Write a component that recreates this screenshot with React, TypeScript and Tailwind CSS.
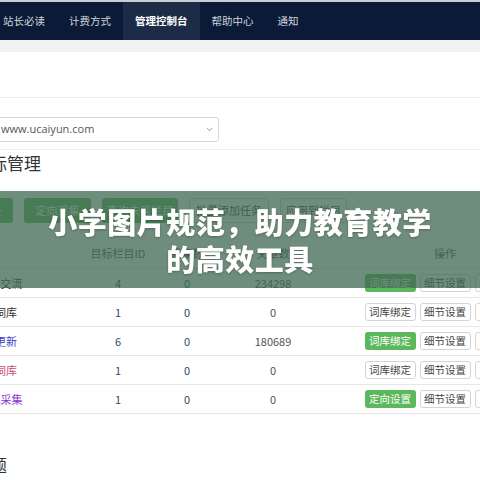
import { ChevronDown } from "lucide-react";

const NAV = ["站长必读", "计费方式", "管理控制台", "帮助中心", "通知"];

const ACTIONS = [
  { label: "添加 +", green: true, w: "w-[53px]" },
  { label: "定向采集", green: true, w: "w-[67px]" },
  { label: "查询未采栏目", green: true, w: "w-[76px]" },
  { label: "批量添加任务", green: false, w: "w-[80px]" },
  { label: "应用到栏目", green: false, w: "w-[67px]" },
];

type Row = {
  name: string;
  color: string;
  id: string;
  got: string;
  total: string;
  first: string;
  green: boolean;
};

const ROWS: Row[] = [
  { name: "站长圈交流", color: "text-[#333333]", id: "4", got: "0", total: "234298", first: "词库绑定", green: true },
  { name: "同义词库", color: "text-[#333333]", id: "1", got: "0", total: "0", first: "词库绑定", green: false },
  { name: "实时更新", color: "text-[#3b3fc9]", id: "6", got: "0", total: "180689", first: "词库绑定", green: true },
  { name: "关键词库", color: "text-[#c4506b]", id: "1", got: "0", total: "0", first: "词库绑定", green: false },
  { name: "自动化采集", color: "text-[#8a36cf]", id: "1", got: "0", total: "0", first: "定向设置", green: true },
];

const COLS = "grid grid-cols-[130px_116px_22px_150px_194px]";

const Cell = ({ children, className = "" }: { children: React.ReactNode; className?: string }) => (
  <div className={`flex items-center justify-center whitespace-nowrap ${className}`}>{children}</div>
);

const RowButton = ({ label, green }: { label: string; green: boolean }) => (
  <div
    className={`w-[51px] h-[18px] flex-shrink-0 flex items-center justify-center rounded-[3px] text-[10.5px] ${
      green ? "bg-[#5cb85c] text-white" : "bg-white border border-[#d4d4d4] text-[#444]"
    }`}
  >
    {label}
  </div>
);

export default function App() {
  return (
    <div
      className="relative w-[480px] h-[480px] overflow-hidden bg-white"
      style={{ fontFamily: '"Noto Sans CJK SC", "Open Sans", sans-serif' }}
    >
      {/* top nav */}
      <div className="h-[2px] bg-[#c9ced6]" />
      <div className="h-[38px] bg-[#0b1a36] flex ml-[-9px]">
        {NAV.map((item) => (
          <div
            key={item}
            className={`px-[12px] flex items-center text-[10.5px] ${
              item === "管理控制台" ? "bg-[#1c2b46] text-white font-bold" : "text-[#ced5df]"
            }`}
          >
            {item}
          </div>
        ))}
      </div>
      <div className="h-[12px] bg-[#f2f2f2]" />

      {/* site select */}
      <div className="h-[45px]" />
      <div className="border-t border-[#eeeeee] pt-[19px] pb-[7px] border-b">
        <div className="ml-[-12px] w-[231px] h-[25px] border border-[#d8d8d8] rounded-[3px] flex items-center justify-between pl-[12px] pr-[4px]">
          <span className="text-[11px] text-[#555]" style={{ fontFamily: '"Open Sans", sans-serif' }}>
            www.ucaiyun.com
          </span>
          <ChevronDown size={9} strokeWidth={2} className="text-[#777]" />
        </div>
      </div>

      {/* heading */}
      <div className="ml-[-27px] h-[26px] leading-[26px] text-[17px] text-[#333]">目标管理</div>

      {/* action buttons */}
      <div className="mt-[22px] ml-[-40px] flex gap-[11px] h-[25px]">
        {ACTIONS.map((a) => (
          <div
            key={a.label}
            className={`${a.w} flex-shrink-0 flex items-center justify-center rounded-[3px] text-[11px] whitespace-nowrap ${
              a.green ? "bg-[#5cb85c] text-white" : "bg-white border border-[#d4d4d4] text-[#444]"
            }`}
          >
            {a.label}
          </div>
        ))}
      </div>

      {/* table */}
      <div className="mt-[16px] ml-[-70px] w-[612px]">
        <div className={`${COLS} h-[30px] border-b border-[#e3e3e3] text-[11px] text-[#555]`}>
          <Cell className="justify-start pl-[4px]">栏目名称</Cell>
          <Cell>目标栏目ID</Cell>
          <Cell>采集数</Cell>
          <Cell>文章数</Cell>
          <Cell>操作</Cell>
        </div>
        {ROWS.map((r, i) => (
          <div key={i} className={`${COLS} h-[29px] border-b border-[#e6e6e6] text-[11px]`}>
            <Cell className={r.color}>{r.name}</Cell>
            <Cell className="text-[#2f4a68]">{r.id}</Cell>
            <Cell className="text-[#2f4a68]">{r.got}</Cell>
            <Cell className="text-[#555]">{r.total}</Cell>
            <Cell className="gap-[4px]">
              <RowButton label={r.first} green={r.green} />
              <RowButton label="细节设置" green={false} />
              <RowButton label="删除" green={false} />
            </Cell>
          </div>
        ))}
      </div>

      {/* next section heading */}
      <div className="mt-[38px] ml-[-10px] h-[26px] leading-[26px] text-[17px] text-[#333]">题</div>

      {/* title overlay */}
      <div className="absolute left-0 right-0 top-[191px] h-[97px] bg-[rgba(63,103,82,0.75)] flex flex-col items-center justify-center">
        <div className="text-white text-[29px] font-black leading-[37px] tracking-[0.5px] drop-shadow-[0_1px_1px_rgba(0,0,0,0.25)]">
          小学图片规范，助力教育教学
        </div>
        <div className="text-white text-[29px] font-black leading-[37px] tracking-[0.5px] drop-shadow-[0_1px_1px_rgba(0,0,0,0.25)]">
          的高效工具
        </div>
      </div>
    </div>
  );
}
